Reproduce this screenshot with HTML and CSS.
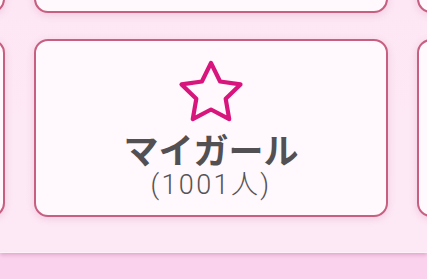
FILE: index.html
```html
<!DOCTYPE html>
<html lang="ja">
<head>
<meta charset="utf-8">
<link rel="stylesheet" href="styles.css">
</head>
<body>
<div class="panel">
  <div class="grid">
    <div class="card"></div>
    <div class="card"></div>
    <div class="card"></div>
    <div class="card"></div>
    <div class="card main">
      <svg class="star" viewBox="-34 -34 68 62" width="68" height="62">
        <polygon points="0,-31 9.1,-12.5 29.48,-9.58 14.7,4.8 18.22,25.08 0,15.5 -18.22,25.08 -14.7,4.8 -29.48,-9.58 -9.1,-12.5" fill="none" stroke="#d8157c" stroke-width="4.2" stroke-linejoin="round"/>
      </svg>
      <div class="title">マイガール</div>
      <div class="count">(1001人)</div>
    </div>
    <div class="card"></div>
  </div>
</div>
<div class="footer"></div>
</body>
</html>
```
FILE: styles.css
```css
html, body {
  margin: 0;
  padding: 0;
}
body {
  width: 427px;
  height: 279px;
  overflow: hidden;
  background: #fbd2ee;
  font-family: "Noto Sans CJK JP", "Noto Sans", sans-serif;
}
.panel {
  height: 252px;
  overflow: hidden;
  background: linear-gradient(180deg, #fde7f4 0%, #fde9f6 100%);
  border-bottom: 1px solid #fff0f8;
  box-shadow: 0 2px 4px rgba(170, 90, 140, 0.35);
  position: relative;
  z-index: 1;
}
.grid {
  display: grid;
  grid-template-columns: 354px 354px 354px;
  grid-auto-rows: 178px;
  column-gap: 29px;
  row-gap: 26px;
  margin-left: -349px;
  margin-top: -165px;
}
.card {
  box-sizing: border-box;
  border: 2.8px solid #c75f80;
  border-radius: 14px;
  background: #fff8fc;
  box-shadow: 0 2px 7px rgba(200, 110, 160, 0.25);
}
.main {
  display: flex;
  flex-direction: column;
  align-items: center;
  padding-top: 19px;
}
.star {
  display: block;
}
.title {
  margin-top: 9px;
  font-size: 35px;
  font-weight: 700;
  line-height: 36px;
  color: #525052;
}
.count {
  margin-top: 3px;
  font-family: Roboto, "Noto Sans CJK JP", sans-serif;
  font-size: 27px;
  font-weight: 300;
  line-height: 30px;
  letter-spacing: 2.4px;
  color: #555355;
}
.footer {
  height: 27px;
}
```
